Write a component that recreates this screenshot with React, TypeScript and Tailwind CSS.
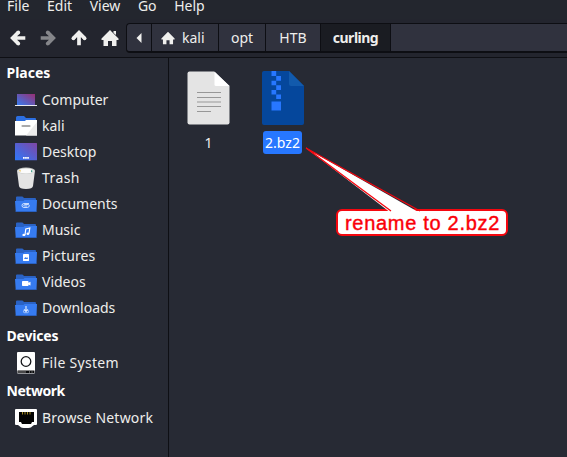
import type { ReactNode } from "react";

function Svg({ w, h, children }: { w: number; h: number; children: ReactNode }) {
  return (
    <svg width={w} height={h} viewBox={`0 0 ${w} ${h}`} className="block shrink-0">
      {children}
    </svg>
  );
}

function Folder({ children }: { children: ReactNode }) {
  return (
    <Svg w={22} h={22}>
      <path d="M1 5V4.500q0-1 1-1h5q1 0 1.500 1l.5.500h11q1 0 1 1V9H1z" fill="#2a62c4" />
      <path d="M0 8h8.500l1-1H22l-.5 11.500H.7z" fill="#367bf0" />
      <path d="M.7 18.500h20.800" stroke="#2a62c4" />
      {children}
    </Svg>
  );
}

const computer = (
  <Svg w={22} h={22}>
    <defs>
      <linearGradient id="screen" x1="0" y1="1" x2="1" y2="0">
        <stop offset="0" stopColor="#367bf0" />
        <stop offset="1" stopColor="#982f72" />
      </linearGradient>
    </defs>
    <rect x="2" y="5" width="18" height="11" fill="url(#screen)" />
    <path d="M0 16.500h22" stroke="#e9eaf0" />
  </Svg>
);

const home = (
  <Svg w={22} h={22}>
    <path d="M1 6V2.500Q1 1 2.500 1H9l2 2h9q1 0 1 1v3H1z" fill="#2c6fe2" />
    <path d="M0 6h10l1-1h11v15.500H0z" fill="#fff" />
    <path d="M22 7v13.500H11z" fill="#ececec" />
    <path d="M7.500 11h7" stroke="#aaa" strokeWidth="2.200" strokeLinecap="round" />
  </Svg>
);

const desktop = (
  <Svg w={22} h={22}>
    <defs>
      <linearGradient id="desk" x1="0" y1="1" x2="1" y2="0">
        <stop offset="0" stopColor="#2d78fb" />
        <stop offset="1" stopColor="#8046a4" />
      </linearGradient>
    </defs>
    <rect y="2" width="22" height="17.300" rx=".5" fill="url(#desk)" />
    <path d="M8 16.800h6" stroke="#fff" strokeWidth="1.800" strokeDasharray="1.7 .4" />
  </Svg>
);

const trash = (
  <Svg w={22} h={22}>
    <path d="M2 3.500 4 19q.3 3 7 3t7-3l2-15.500z" fill="#e4e4e4" />
    <ellipse cx="11" cy="3.700" rx="9" ry="3.200" fill="#c9cbc9" />
    <ellipse cx="11" cy="4" rx="7.800" ry="2.400" fill="#fbfbfb" />
    <path d="m4 3 2 .5-1 1.500z" fill="#e5b942" />
    <path d="m16 3 2 1-2 1.500z" fill="#45a08d" />
  </Svg>
);

const documents = (
  <Folder>
    <path
      d="M14 10.500H9a2 2 0 0 0 0 4h3.500a2 2 0 0 0 1.800-2q-.2-1-1.300-1H9.500q-1.500.7-.2 1.500h3"
      fill="none"
      stroke="#d8e6ff"
      strokeWidth=".9"
    />
  </Folder>
);

const music = (
  <Folder>
    <path d="m10 16 .8-6 4-1-.8 5.500" fill="none" stroke="#fff" strokeWidth="1.200" />
    <ellipse cx="8.900" cy="15.900" rx="1.500" ry="1.200" fill="#fff" />
    <ellipse cx="12.900" cy="14.700" rx="1.400" ry="1.200" fill="#fff" />
  </Folder>
);

const pictures = (
  <Folder>
    <rect x="8" y="9" width="6" height="7" rx=".4" fill="#fff" />
    <path d="m9 14 1.300-2 .9 1 1-.9.8 1.900z" fill="#367bf0" />
  </Folder>
);

const videos = (
  <Folder>
    <rect x="7" y="10" width="6.500" height="5" rx=".7" fill="#fff" />
    <path d="m13 12 2.500-1.200v3.600L13 13.500z" fill="#fff" />
  </Folder>
);

const downloads = (
  <Folder>
    <path d="M11 9v5.500m-2-2 2 2 2-2" fill="none" stroke="#d8e6ff" strokeWidth="1.200" />
    <path d="M8.500 13.500v1.200q0 1 1 1h3q1 0 1-1v-1.200" fill="none" stroke="#bdd5ff" strokeWidth=".8" />
  </Folder>
);

const disk = (
  <Svg w={22} h={22}>
    <rect x="2" y="0" width="18" height="21.500" rx="1" fill="#fff" />
    <circle cx="11" cy="9.500" r="4.800" fill="#fff" stroke="#16171b" strokeWidth="1.300" />
    <rect x="2.500" y="18.500" width="17" height="2.500" fill="#08090b" />
    <path d="M3 20h8" stroke="#888" />
    <path d="M14.500 19v2m2.500-2v2" stroke="#777" strokeWidth=".8" />
  </Svg>
);

const network = (
  <Svg w={22} h={22}>
    <path d="M1 2h20q1 0 1 1v14q0 1-1 1h-2l-2 1.500q-1 1.500-6 1.500t-6-1.500L3 18H1q-1 0-1-1V3q0-1 1-1z" fill="#fff" />
    <path d="M4 5h15v10h-2l-1 2H7l-1-2H4z" fill="#030303" />
    <path d="M7.500 5v2.500m2.500-2.500v2.500M12.500 5v2.500m2.500-2.500v2.500" stroke="#a38a24" />
  </Svg>
);

function Heading({ children }: { children: ReactNode }) {
  return <div className="flex h-[29px] items-center pl-[6.500px] font-bold text-white">{children}</div>;
}

function Row({ icon, label, className = "" }: { icon: ReactNode; label: string; className?: string }) {
  return (
    <div className={`flex h-[26px] items-center gap-[5px] pl-[15px] ${className}`}>
      {icon}
      <span>{label}</span>
    </div>
  );
}

function Arrow({ turn, color }: { turn: string; color: string }) {
  return (
    <svg width="16" height="16" viewBox="0 0 16 16" className={`block ${turn}`}>
      <path
        d="M15.300 8H4M8.300 2.400 2.700 8l5.600 5.600"
        fill="none"
        stroke={color}
        strokeWidth="3.700"
        strokeLinejoin="miter"
      />
      <circle cx="8.300" cy="2.400" r="1.850" fill={color} />
      <circle cx="8.300" cy="13.600" r="1.850" fill={color} />
    </svg>
  );
}

function House({ size, chimney }: { size: number; chimney?: boolean }) {
  return (
    <svg width={size} height={size} viewBox="0 0 18 18" className="block">
      <path d="M9 1 .5 9.500V11h2v6H7v-5h4v5h4.500v-6h2V9.500z" fill="#f0f0ee" />
      {chimney && <path d="M12.500 2H15v4l-2.500-2z" fill="#f0f0ee" />}
    </svg>
  );
}

export default function App() {
  return (
    <div className="relative flex h-[457px] w-[567px] flex-col overflow-hidden bg-[#272a34] font-['Noto_Sans',sans-serif] text-[14px] leading-5 text-[#eeeeec]">
      <nav className="flex h-[19px] shrink-0 gap-[17.6px] bg-[#23262e] pl-[7px] leading-3">
        <span>File</span>
        <span>Edit</span>
        <span>View</span>
        <span>Go</span>
        <span>Help</span>
      </nav>
      <div className="flex h-[39px] shrink-0 border-b border-[#0e0f14] bg-[#23252e] pt-1">
        <div className="flex h-[30px] w-[126px] shrink-0 items-center gap-[14.500px] pl-[9.500px]">
          <Arrow turn="" color="#f0f0ee" />
          <Arrow turn="rotate-180" color="#85868a" />
          <Arrow turn="rotate-90" color="#f0f0ee" />
          <House size={18} chimney />
        </div>
        <div className="flex h-[30px] grow overflow-hidden rounded-l-[4px] border-y border-l border-b-2 border-[#0d0e13] bg-[#30323e]">
          <div className="flex w-[25px] items-center justify-center border-r border-[#0d0e13]">
            <svg width="6" height="10" viewBox="0 0 6 10">
              <path d="M5.500 0v10L.5 5z" fill="#f0f0ee" />
            </svg>
          </div>
          <div className="flex w-[67px] items-center gap-[7px] border-r border-[#0d0e13] pl-[9px]">
            <House size={14} />
            <span>kali</span>
          </div>
          <div className="flex w-[47px] items-center justify-center border-r border-[#0d0e13]">opt</div>
          <div className="flex w-[55px] items-center justify-center border-r border-[#0d0e13]">HTB</div>
          <div className="flex w-[70px] items-center justify-center border-r border-[#0d0e13] bg-[#1a1c22] font-bold tracking-[-0.5px]">
            curling
          </div>
        </div>
      </div>
      <div className="flex grow">
        <aside className="w-[169px] shrink-0 border-r border-[#0e0f14]">
          <Heading>Places</Heading>
          <Row icon={computer} label="Computer" />
          <Row icon={home} label="kali" />
          <Row icon={desktop} label="Desktop" />
          <Row icon={trash} label="Trash" className="tracking-[0.4px]" />
          <Row icon={documents} label="Documents" />
          <Row icon={music} label="Music" />
          <Row icon={pictures} label="Pictures" className="tracking-[0.1px]" />
          <Row icon={videos} label="Videos" />
          <Row icon={downloads} label="Downloads" />
          <Heading>
            <span className="tracking-[-0.2px]">Devices</span>
          </Heading>
          <Row icon={disk} label="File System" className="tracking-[0.3px]" />
          <Heading>
            <span className="tracking-[-0.45px]">Network</span>
          </Heading>
          <Row icon={network} label="Browse Network" className="tracking-[0.2px]" />
        </aside>
        <main className="flex items-start gap-[32px] pt-[13px] pl-[18px]">
          <div className="flex w-[43px] flex-col items-center gap-[6px]">
            <Svg w={43} h={54}>
              <path d="M2.500.5H27L42.500 15v36.500q0 2-2 2h-38q-2 0-2-2v-49q0-2 2-2z" fill="#e4e4e4" />
              <path d="M27.500.5v13q0 1.500 1.500 1.500h13.500z" fill="#fff" />
              <path d="M10 21.500h24M10 26.500h24M10 31h24M10 35.500h24M10 40.500h14" stroke="#979797" strokeWidth="1.200" />
            </Svg>
            <span className="flex h-[23px] items-center">1</span>
          </div>
          <div className="flex w-[42px] flex-col items-start gap-[6px]">
            <Svg w={42} h={54}>
              <path d="M2 0h25l15 15v37q0 2-2 2H2q-2 0-2-2V2q0-2 2-2z" fill="#05479c" />
              <path d="M27 0v13q0 2 2 2h13z" fill="#125aac" />
              <path
                d="M9.500 0h4.700v5h4.800v4.700h-4.800v4.600h4.800V19h-4.800v4.500h4.800V28h-4.800v-4.500H9.500V19h4.700v-4.700H9.500V9.700h4.700V5H9.500zM9.500 30.500H19v9H9.500z"
                fill="#2777ff"
              />
            </Svg>
            <span className="ml-px flex h-[23px] w-[39px] items-center justify-center rounded-[3px] bg-[#2777ff] text-white">
              2.bz2
            </span>
          </div>
        </main>
      </div>
      <div className="absolute top-[209px] left-[336px] flex h-[27px] w-[172px] items-center justify-center rounded-[6px] border-2 border-[#f5070f] bg-white pl-px font-['Liberation_Sans',Arial,sans-serif] text-[20px] leading-none tracking-[0.7px] whitespace-nowrap text-[#fa0008] [-webkit-text-stroke:0.4px]">
        rename to 2.bz2
      </div>
      <svg width="120" height="68" viewBox="0 0 120 68" className="absolute top-[146px] left-[303px]">
        <path d="m3 2 85 65H117z" fill="#fff" />
        <path d="M88 65 3 2l114 63" fill="none" stroke="#f5070f" strokeWidth="1.300" />
      </svg>
    </div>
  );
}
